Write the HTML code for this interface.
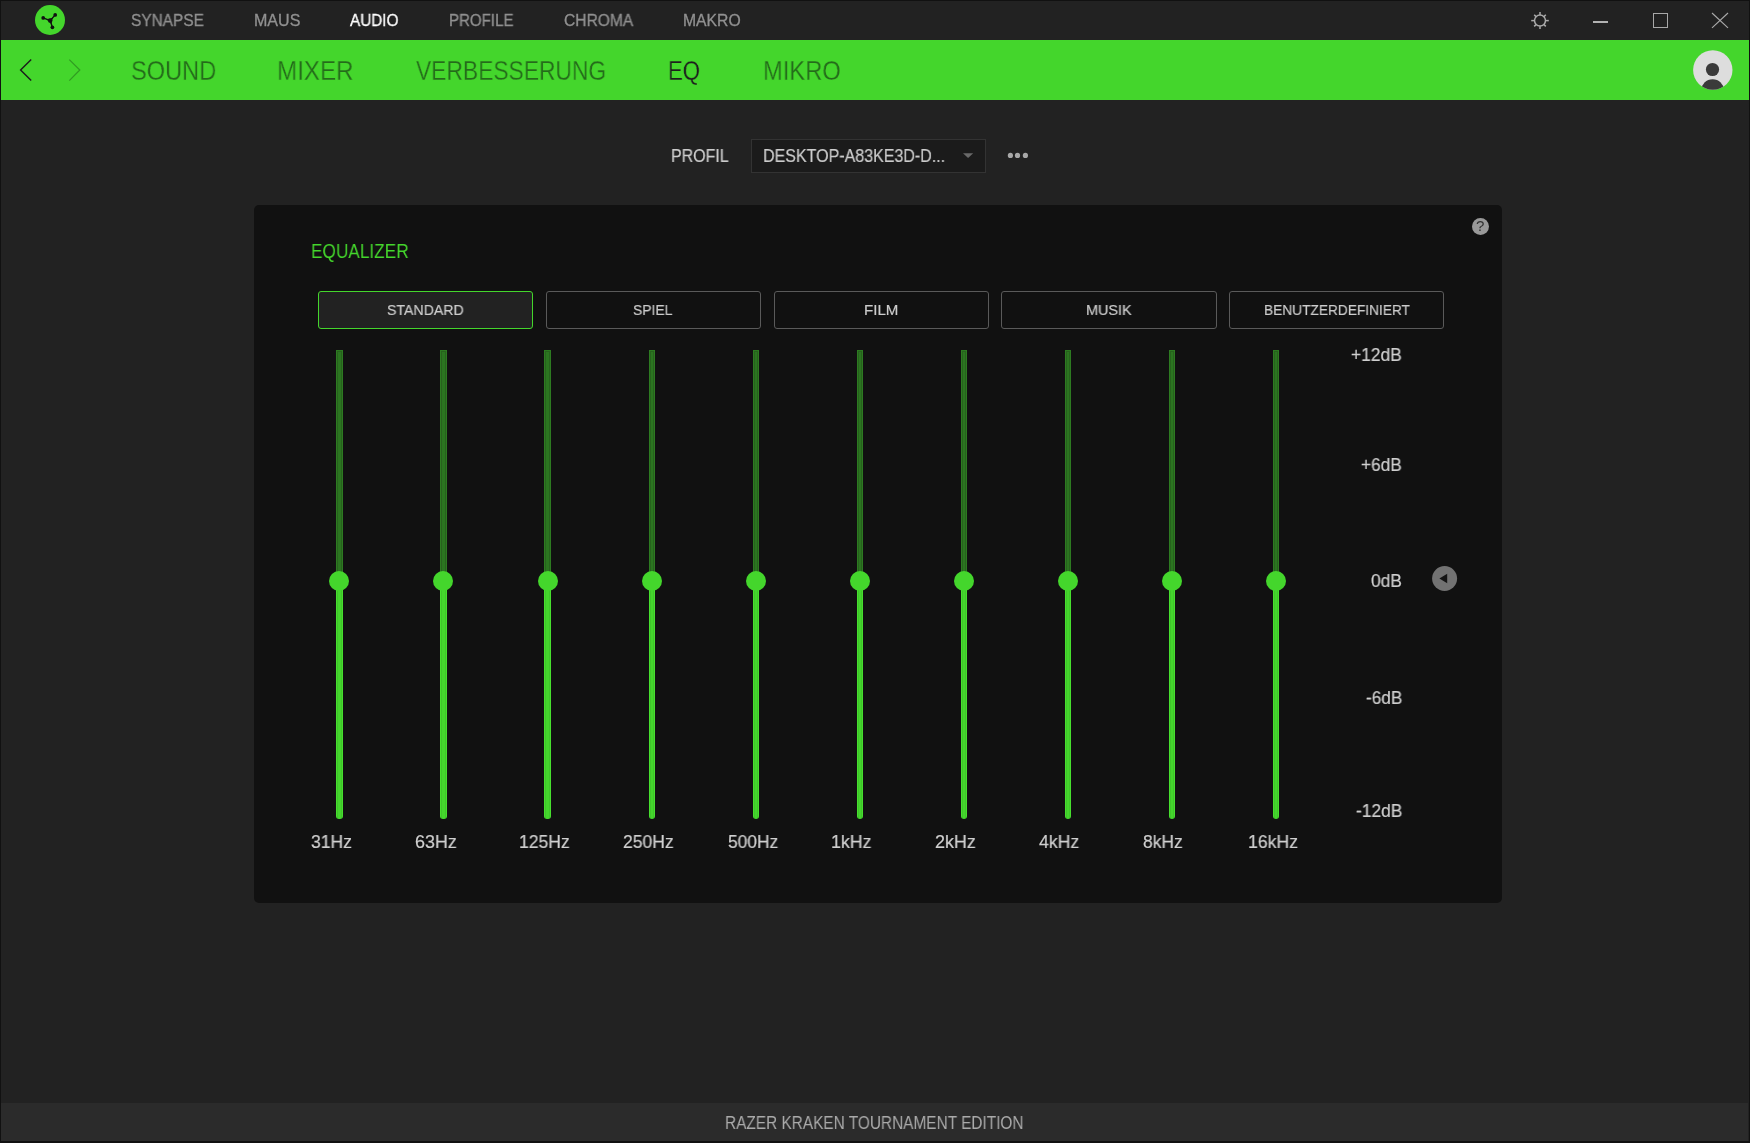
<!DOCTYPE html>
<html><head><meta charset="utf-8"><title>Razer Synapse</title>
<style>
*{margin:0;padding:0;box-sizing:border-box}
html,body{width:1750px;height:1143px;overflow:hidden;background:#222222;font-family:"Liberation Sans",sans-serif;}
#app{position:absolute;left:0;top:0;width:1750px;height:1143px;background:#222222;overflow:hidden}
.a{position:absolute}
.t{position:absolute;white-space:nowrap;line-height:1;transform-origin:0 0;will-change:transform;}
.btn{position:absolute;top:291px;width:215px;height:38px;border:1px solid #5a5a5a;border-radius:3px;background:#111111;}
.btn.sel{border:1.5px solid #44d62c;background:#222}
.bl{position:absolute;top:291px;width:215px;height:38px;line-height:38px;text-align:center;font-size:15px;color:#cccccc;white-space:nowrap}
.trk{position:absolute;width:7px}
</style></head><body><div id="app">

<div class="a" style="left:0;top:0;width:1750px;height:1px;background:#111"></div>
<div class="a" style="left:1px;top:40px;width:1748px;height:60px;background:#44d62c"></div>
<div class="a" style="left:0;top:0;width:1px;height:1143px;background:#111"></div>
<div class="a" style="left:1749px;top:0;width:1px;height:1143px;background:#111"></div>
<div class="a" style="left:1px;top:1103px;width:1747px;height:38px;background:#2b2b2b"></div>
<div class="a" style="left:0;top:1141px;width:1750px;height:2px;background:#111"></div>
<svg class="a" style="left:35px;top:5px" width="30" height="30" viewBox="0 0 30 30">
<circle cx="15" cy="15" r="15" fill="#44d62c"/>
<g stroke="#111" stroke-width="1.4" stroke-linecap="round" fill="#111">
<line x1="15.2" y1="15.6" x2="20.2" y2="9.9"/><line x1="15.2" y1="15.6" x2="8.2" y2="12.9"/><line x1="15.2" y1="15.6" x2="17.4" y2="22.3"/>
</g>
<circle cx="15.2" cy="15.6" r="2.3" fill="#111"/><path d="M17.97 12.44 Q14.89 14.34 11.28 14.09 Q14.26 16.5 16.51 19.59 Q16.47 15.86 17.97 12.44 Z" fill="#111"/><circle cx="20.2" cy="9.9" r="1.85" fill="#111"/><circle cx="8.2" cy="12.9" r="1.85" fill="#111"/><circle cx="17.4" cy="22.3" r="1.85" fill="#111"/>
</svg>
<svg class="a" style="left:1528px;top:8px" width="24" height="24" viewBox="0 0 24 24">
<g stroke="#ababab" stroke-width="1.5" fill="none" stroke-linecap="butt">
<circle cx="12" cy="12.6" r="5.5"/>
<g id="sp">
<line x1="12" y1="4.0" x2="12" y2="7"/><line x1="12" y1="18.2" x2="12" y2="21.1"/>
<line x1="3.2" y1="12.6" x2="6.4" y2="12.6"/><line x1="17.6" y1="12.6" x2="20.8" y2="12.6"/>
<line x1="6.2" y1="6.8" x2="8" y2="8.6"/><line x1="16" y1="16.6" x2="17.8" y2="18.4"/>
<line x1="17.8" y1="6.8" x2="16" y2="8.6"/><line x1="8" y1="16.6" x2="6.2" y2="18.4"/>
</g></g></svg>
<div class="a" style="left:1593px;top:21px;width:15px;height:2px;background:#b2b2b2"></div>
<div class="a" style="left:1653px;top:13px;width:15px;height:15px;border:1px solid #a8a8a8"></div>
<svg class="a" style="left:1711px;top:12px" width="18" height="18" viewBox="0 0 18 18"><g stroke="#ababab" stroke-width="1.1"><line x1="1" y1="1" x2="17" y2="15.8"/><line x1="17" y1="1" x2="1" y2="15.8"/></g></svg>
<svg class="a" style="left:15px;top:55px" width="80" height="30" viewBox="0 0 80 30" fill="none">
<polyline points="16.2,4.6 5.6,15 16.2,25.6" stroke="#1c1c1c" stroke-width="1.45"/>
<polyline points="54.3,4.6 64.8,15 54.3,25.6" stroke="#319c22" stroke-width="1.25"/>
</svg>
<svg class="a" style="left:1693px;top:50px" width="40" height="40" viewBox="0 0 40 40">
<defs><clipPath id="avc"><circle cx="19.8" cy="20" r="19.7"/></clipPath></defs>
<circle cx="19.8" cy="20" r="19.7" fill="#dddddd"/>
<g clip-path="url(#avc)" fill="#3a3a3a"><circle cx="19.5" cy="19.5" r="6.6"/><ellipse cx="19.6" cy="40.4" rx="11.4" ry="11.2"/></g>
</svg>
<div class="a" style="left:751px;top:139px;width:235px;height:34px;border:1px solid #333;background:#1b1b1b"></div>
<svg class="a" style="left:962px;top:152px" width="12" height="7" viewBox="0 0 12 7"><path d="M1 1.2 L11.2 1.2 L6.1 6.1 Z" fill="#6a6a6a"/></svg>
<svg class="a" style="left:1006px;top:151px" width="24" height="10" viewBox="0 0 24 10"><g fill="#a8a8a8"><circle cx="4.4" cy="4.45" r="2.6"/><circle cx="11.5" cy="4.45" r="2.6"/><circle cx="19.4" cy="4.45" r="2.6"/></g></svg>
<div class="a" style="left:254px;top:205px;width:1248px;height:698px;background:#111111;border-radius:5px"></div>
<div class="a" style="left:1472px;top:218px;width:17px;height:17px;border-radius:50%;background:#999"></div>
<div class="t" style="left:1476px;top:219px;font-size:14px;color:#333;transform:scaleX(1.08)">?</div>
<div class="btn sel" style="left:318px;width:215px"></div>
<div class="btn" style="left:546px;width:215px"></div>
<div class="btn" style="left:774px;width:215px"></div>
<div class="btn" style="left:1001px;width:216px"></div>
<div class="btn" style="left:1229px;width:215px"></div>
<div class="a" style="left:336px;top:350px;width:7px;height:232px;background:linear-gradient(90deg,#2d7b21 0 1px,#27621d 1px 2px,#2b7520 2px 5px,#27621d 5px 6px,#2d7b21 6px 7px)"></div>
<div class="a" style="left:336px;top:350px;width:7px;height:1px;background:#2d7b21"></div>
<div class="a" style="left:337px;top:351px;width:5px;height:1px;background:#27621d"></div>
<div class="a" style="left:336px;top:580px;width:7px;height:239px;background:linear-gradient(90deg,#47e02e 0 1px,#3fc62a 1px 2px,#44d62c 2px 5px,#3fc62a 5px 6px,#47e02e 6px 7px);border-radius:0 0 3px 3px"></div>
<div class="a" style="left:329px;top:571px;width:20px;height:20px;border-radius:50%;background:#44d62c"></div>
<div class="a" style="left:440px;top:350px;width:7px;height:232px;background:linear-gradient(90deg,#2d7b21 0 1px,#27621d 1px 2px,#2b7520 2px 5px,#27621d 5px 6px,#2d7b21 6px 7px)"></div>
<div class="a" style="left:440px;top:350px;width:7px;height:1px;background:#2d7b21"></div>
<div class="a" style="left:441px;top:351px;width:5px;height:1px;background:#27621d"></div>
<div class="a" style="left:440px;top:580px;width:7px;height:239px;background:linear-gradient(90deg,#47e02e 0 1px,#3fc62a 1px 2px,#44d62c 2px 5px,#3fc62a 5px 6px,#47e02e 6px 7px);border-radius:0 0 3px 3px"></div>
<div class="a" style="left:433px;top:571px;width:20px;height:20px;border-radius:50%;background:#44d62c"></div>
<div class="a" style="left:544px;top:350px;width:7px;height:232px;background:linear-gradient(90deg,#2d7b21 0 1px,#27621d 1px 2px,#2b7520 2px 5px,#27621d 5px 6px,#2d7b21 6px 7px)"></div>
<div class="a" style="left:544px;top:350px;width:7px;height:1px;background:#2d7b21"></div>
<div class="a" style="left:545px;top:351px;width:5px;height:1px;background:#27621d"></div>
<div class="a" style="left:544px;top:580px;width:7px;height:239px;background:linear-gradient(90deg,#47e02e 0 1px,#3fc62a 1px 2px,#44d62c 2px 5px,#3fc62a 5px 6px,#47e02e 6px 7px);border-radius:0 0 3px 3px"></div>
<div class="a" style="left:538px;top:571px;width:20px;height:20px;border-radius:50%;background:#44d62c"></div>
<div class="a" style="left:649px;top:350px;width:6px;height:232px;background:linear-gradient(90deg,#2d7b21 0 1px,#27621d 1px 2px,#2b7520 2px 4px,#27621d 4px 5px,#2d7b21 5px 6px)"></div>
<div class="a" style="left:649px;top:350px;width:6px;height:1px;background:#2d7b21"></div>
<div class="a" style="left:650px;top:351px;width:4px;height:1px;background:#27621d"></div>
<div class="a" style="left:649px;top:580px;width:6px;height:239px;background:linear-gradient(90deg,#47e02e 0 1px,#3fc62a 1px 2px,#44d62c 2px 4px,#3fc62a 4px 5px,#47e02e 5px 6px);border-radius:0 0 3px 3px"></div>
<div class="a" style="left:642px;top:571px;width:20px;height:20px;border-radius:50%;background:#44d62c"></div>
<div class="a" style="left:753px;top:350px;width:6px;height:232px;background:linear-gradient(90deg,#2d7b21 0 1px,#27621d 1px 2px,#2b7520 2px 4px,#27621d 4px 5px,#2d7b21 5px 6px)"></div>
<div class="a" style="left:753px;top:350px;width:6px;height:1px;background:#2d7b21"></div>
<div class="a" style="left:754px;top:351px;width:4px;height:1px;background:#27621d"></div>
<div class="a" style="left:753px;top:580px;width:6px;height:239px;background:linear-gradient(90deg,#47e02e 0 1px,#3fc62a 1px 2px,#44d62c 2px 4px,#3fc62a 4px 5px,#47e02e 5px 6px);border-radius:0 0 3px 3px"></div>
<div class="a" style="left:746px;top:571px;width:20px;height:20px;border-radius:50%;background:#44d62c"></div>
<div class="a" style="left:857px;top:350px;width:6px;height:232px;background:linear-gradient(90deg,#2d7b21 0 1px,#27621d 1px 2px,#2b7520 2px 4px,#27621d 4px 5px,#2d7b21 5px 6px)"></div>
<div class="a" style="left:857px;top:350px;width:6px;height:1px;background:#2d7b21"></div>
<div class="a" style="left:858px;top:351px;width:4px;height:1px;background:#27621d"></div>
<div class="a" style="left:857px;top:580px;width:6px;height:239px;background:linear-gradient(90deg,#47e02e 0 1px,#3fc62a 1px 2px,#44d62c 2px 4px,#3fc62a 4px 5px,#47e02e 5px 6px);border-radius:0 0 3px 3px"></div>
<div class="a" style="left:850px;top:571px;width:20px;height:20px;border-radius:50%;background:#44d62c"></div>
<div class="a" style="left:961px;top:350px;width:6px;height:232px;background:linear-gradient(90deg,#2d7b21 0 1px,#27621d 1px 2px,#2b7520 2px 4px,#27621d 4px 5px,#2d7b21 5px 6px)"></div>
<div class="a" style="left:961px;top:350px;width:6px;height:1px;background:#2d7b21"></div>
<div class="a" style="left:962px;top:351px;width:4px;height:1px;background:#27621d"></div>
<div class="a" style="left:961px;top:580px;width:6px;height:239px;background:linear-gradient(90deg,#47e02e 0 1px,#3fc62a 1px 2px,#44d62c 2px 4px,#3fc62a 4px 5px,#47e02e 5px 6px);border-radius:0 0 3px 3px"></div>
<div class="a" style="left:954px;top:571px;width:20px;height:20px;border-radius:50%;background:#44d62c"></div>
<div class="a" style="left:1065px;top:350px;width:6px;height:232px;background:linear-gradient(90deg,#2d7b21 0 1px,#27621d 1px 2px,#2b7520 2px 4px,#27621d 4px 5px,#2d7b21 5px 6px)"></div>
<div class="a" style="left:1065px;top:350px;width:6px;height:1px;background:#2d7b21"></div>
<div class="a" style="left:1066px;top:351px;width:4px;height:1px;background:#27621d"></div>
<div class="a" style="left:1065px;top:580px;width:6px;height:239px;background:linear-gradient(90deg,#47e02e 0 1px,#3fc62a 1px 2px,#44d62c 2px 4px,#3fc62a 4px 5px,#47e02e 5px 6px);border-radius:0 0 3px 3px"></div>
<div class="a" style="left:1058px;top:571px;width:20px;height:20px;border-radius:50%;background:#44d62c"></div>
<div class="a" style="left:1169px;top:350px;width:6px;height:232px;background:linear-gradient(90deg,#2d7b21 0 1px,#27621d 1px 2px,#2b7520 2px 4px,#27621d 4px 5px,#2d7b21 5px 6px)"></div>
<div class="a" style="left:1169px;top:350px;width:6px;height:1px;background:#2d7b21"></div>
<div class="a" style="left:1170px;top:351px;width:4px;height:1px;background:#27621d"></div>
<div class="a" style="left:1169px;top:580px;width:6px;height:239px;background:linear-gradient(90deg,#47e02e 0 1px,#3fc62a 1px 2px,#44d62c 2px 4px,#3fc62a 4px 5px,#47e02e 5px 6px);border-radius:0 0 3px 3px"></div>
<div class="a" style="left:1162px;top:571px;width:20px;height:20px;border-radius:50%;background:#44d62c"></div>
<div class="a" style="left:1273px;top:350px;width:6px;height:232px;background:linear-gradient(90deg,#2d7b21 0 1px,#27621d 1px 2px,#2b7520 2px 4px,#27621d 4px 5px,#2d7b21 5px 6px)"></div>
<div class="a" style="left:1273px;top:350px;width:6px;height:1px;background:#2d7b21"></div>
<div class="a" style="left:1274px;top:351px;width:4px;height:1px;background:#27621d"></div>
<div class="a" style="left:1273px;top:580px;width:6px;height:239px;background:linear-gradient(90deg,#47e02e 0 1px,#3fc62a 1px 2px,#44d62c 2px 4px,#3fc62a 4px 5px,#47e02e 5px 6px);border-radius:0 0 3px 3px"></div>
<div class="a" style="left:1266px;top:571px;width:20px;height:20px;border-radius:50%;background:#44d62c"></div>
<svg class="a" style="left:1432px;top:566px" width="26" height="26" viewBox="0 0 26 26"><circle cx="12.6" cy="12.5" r="12.5" fill="#727272"/><path d="M7.4 12.5 L15.2 7.8 L15.2 17.2 Z" fill="#141414"/></svg>
<div class="t" id="tn0" style="left:131px;top:13px;font-size:15.7px;color:#919191;transform:scaleX(0.9821);-webkit-text-stroke:0.3px #919191;">SYNAPSE</div>
<div class="t" id="tn1" style="left:254px;top:13px;font-size:15.7px;color:#919191;transform:scaleX(1.0232);-webkit-text-stroke:0.3px #919191;">MAUS</div>
<div class="t" id="tn2" style="left:350px;top:13px;font-size:15.7px;color:#fff;transform:scaleX(0.9754);-webkit-text-stroke:0.3px #fff;">AUDIO</div>
<div class="t" id="tn3" style="left:449px;top:13px;font-size:15.7px;color:#919191;transform:scaleX(0.9600);-webkit-text-stroke:0.3px #919191;">PROFILE</div>
<div class="t" id="tn4" style="left:564px;top:13px;font-size:15.7px;color:#919191;transform:scaleX(0.9925);-webkit-text-stroke:0.3px #919191;">CHROMA</div>
<div class="t" id="tn5" style="left:683px;top:13px;font-size:15.7px;color:#919191;transform:scaleX(1.0022);-webkit-text-stroke:0.3px #919191;">MAKRO</div>
<div class="t" id="sn0" style="left:131px;top:57px;font-size:27.5px;color:#256b1b;transform:scaleX(0.8586);-webkit-text-stroke:0.28px #44d62c;">SOUND</div>
<div class="t" id="sn1" style="left:277px;top:57px;font-size:27.5px;color:#256b1b;transform:scaleX(0.8781);-webkit-text-stroke:0.28px #44d62c;">MIXER</div>
<div class="t" id="sn2" style="left:416px;top:57px;font-size:27.5px;color:#256b1b;transform:scaleX(0.8296);-webkit-text-stroke:0.28px #44d62c;">VERBESSERUNG</div>
<div class="t" id="sn3" style="left:668px;top:57px;font-size:27.5px;color:#1e1e1e;transform:scaleX(0.8072);-webkit-text-stroke:0.28px #44d62c;">EQ</div>
<div class="t" id="sn4" style="left:763px;top:57px;font-size:27.5px;color:#256b1b;transform:scaleX(0.8626);-webkit-text-stroke:0.28px #44d62c;">MIKRO</div>
<div class="t" id="profil" style="left:671px;top:147px;font-size:18px;color:#cccccc;transform:scaleX(0.8866);-webkit-text-stroke:0.2px #cccccc;">PROFIL</div>
<div class="t" id="dd" style="left:763px;top:147px;font-size:18px;color:#cccccc;transform:scaleX(0.8894);-webkit-text-stroke:0.2px #cccccc;">DESKTOP-A83KE3D-D...</div>
<div class="t" id="eqt" style="left:311px;top:241px;font-size:20px;color:#44d62c;transform:scaleX(0.8615);">EQUALIZER</div>
<div class="t" id="bt0" style="left:387px;top:302px;font-size:15px;color:#cccccc;transform:scaleX(0.9424);-webkit-text-stroke:0.2px #cccccc;">STANDARD</div>
<div class="t" id="bt1" style="left:633px;top:302px;font-size:15px;color:#cccccc;transform:scaleX(0.9260);-webkit-text-stroke:0.2px #cccccc;">SPIEL</div>
<div class="t" id="bt2" style="left:864px;top:302px;font-size:15px;color:#cccccc;transform:scaleX(1.0047);-webkit-text-stroke:0.2px #cccccc;">FILM</div>
<div class="t" id="bt3" style="left:1086px;top:302px;font-size:15px;color:#cccccc;transform:scaleX(0.9615);-webkit-text-stroke:0.2px #cccccc;">MUSIK</div>
<div class="t" id="bt4" style="left:1264px;top:302px;font-size:15px;color:#cccccc;transform:scaleX(0.9139);-webkit-text-stroke:0.2px #cccccc;">BENUTZERDEFINIERT</div>
<div class="t" id="fr0" style="left:311px;top:833px;font-size:18px;color:#d0d0d0;transform:scaleX(0.9742);-webkit-text-stroke:0.2px #d0d0d0;">31Hz</div>
<div class="t" id="fr1" style="left:415px;top:833px;font-size:18px;color:#d0d0d0;transform:scaleX(0.9944);-webkit-text-stroke:0.2px #d0d0d0;">63Hz</div>
<div class="t" id="fr2" style="left:519px;top:833px;font-size:18px;color:#d0d0d0;transform:scaleX(0.9752);-webkit-text-stroke:0.2px #d0d0d0;">125Hz</div>
<div class="t" id="fr3" style="left:623px;top:833px;font-size:18px;color:#d0d0d0;transform:scaleX(0.9751);-webkit-text-stroke:0.2px #d0d0d0;">250Hz</div>
<div class="t" id="fr4" style="left:728px;top:833px;font-size:18px;color:#d0d0d0;transform:scaleX(0.9655);-webkit-text-stroke:0.2px #d0d0d0;">500Hz</div>
<div class="t" id="fr5" style="left:831px;top:833px;font-size:18px;color:#d0d0d0;transform:scaleX(0.9868);-webkit-text-stroke:0.2px #d0d0d0;">1kHz</div>
<div class="t" id="fr6" style="left:935px;top:833px;font-size:18px;color:#d0d0d0;transform:scaleX(0.9940);-webkit-text-stroke:0.2px #d0d0d0;">2kHz</div>
<div class="t" id="fr7" style="left:1039px;top:833px;font-size:18px;color:#d0d0d0;transform:scaleX(0.9813);-webkit-text-stroke:0.2px #d0d0d0;">4kHz</div>
<div class="t" id="fr8" style="left:1143px;top:833px;font-size:18px;color:#d0d0d0;transform:scaleX(0.9692);-webkit-text-stroke:0.2px #d0d0d0;">8kHz</div>
<div class="t" id="fr9" style="left:1248px;top:833px;font-size:18px;color:#d0d0d0;transform:scaleX(0.9810);-webkit-text-stroke:0.2px #d0d0d0;">16kHz</div>
<div class="t" id="db0" style="left:1351px;top:346px;font-size:18px;color:#d0d0d0;transform:scaleX(0.9671);-webkit-text-stroke:0.2px #d0d0d0;">+12dB</div>
<div class="t" id="db1" style="left:1361px;top:456px;font-size:18px;color:#d0d0d0;transform:scaleX(0.9591);-webkit-text-stroke:0.2px #d0d0d0;">+6dB</div>
<div class="t" id="db2" style="left:1371px;top:572px;font-size:18px;color:#d0d0d0;transform:scaleX(0.9648);-webkit-text-stroke:0.2px #d0d0d0;">0dB</div>
<div class="t" id="db3" style="left:1366px;top:689px;font-size:18px;color:#d0d0d0;transform:scaleX(0.9563);-webkit-text-stroke:0.2px #d0d0d0;">-6dB</div>
<div class="t" id="db4" style="left:1356px;top:802px;font-size:18px;color:#d0d0d0;transform:scaleX(0.9657);-webkit-text-stroke:0.2px #d0d0d0;">-12dB</div>
<div class="t" id="foot" style="left:725px;top:1115px;font-size:17.5px;color:#aaaaaa;transform:scaleX(0.8796);">RAZER KRAKEN TOURNAMENT EDITION</div>
</div></body></html>
